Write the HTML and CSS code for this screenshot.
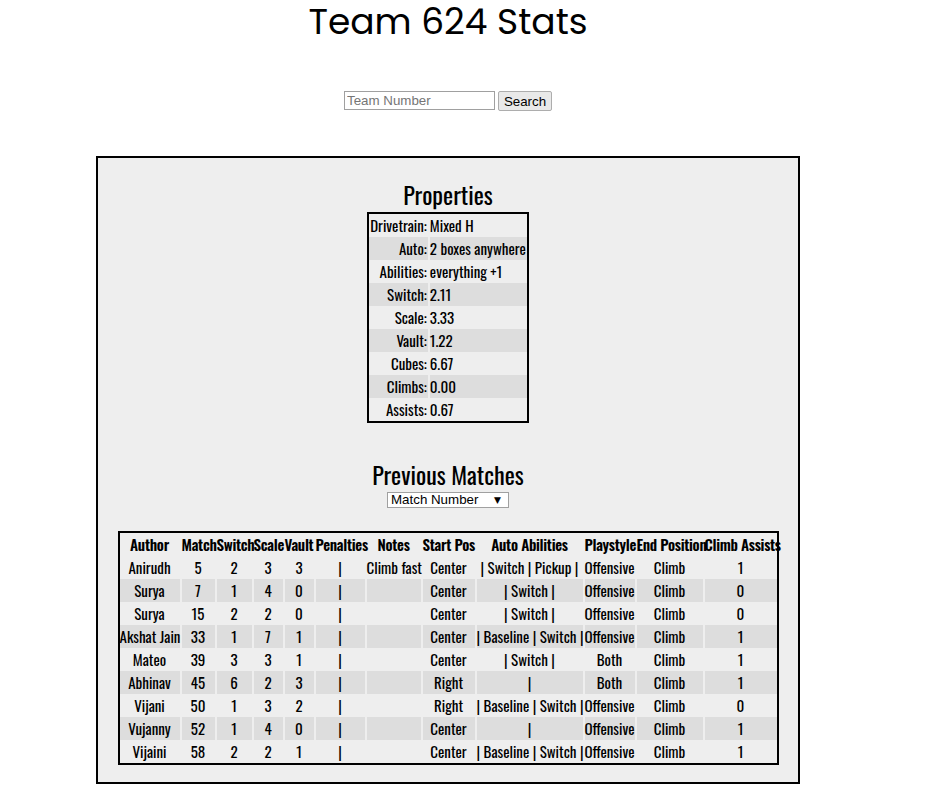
FILE: index.html
```html
<!DOCTYPE html>
<html>
<head>
<meta charset="utf-8">
<title>Team 624 Stats</title>
<link rel="stylesheet" href="styles.css">
</head>
<body>
<div class="page">
  <h1 class="title">Team 624 Stats</h1>
  <form class="search">
    <input class="search-input" type="text" placeholder="Team Number">
    <button class="search-btn" type="button">Search</button>
  </form>
  <div class="panel">
    <h2 class="heading">Properties</h2>
    <table class="props">
      <tr><td class="k">Drivetrain:</td><td class="v">Mixed H</td></tr>
      <tr><td class="k">Auto:</td><td class="v">2 boxes anywhere</td></tr>
      <tr><td class="k">Abilities:</td><td class="v">everything +1</td></tr>
      <tr><td class="k">Switch:</td><td class="v">2.11</td></tr>
      <tr><td class="k">Scale:</td><td class="v">3.33</td></tr>
      <tr><td class="k">Vault:</td><td class="v">1.22</td></tr>
      <tr><td class="k">Cubes:</td><td class="v">6.67</td></tr>
      <tr><td class="k">Climbs:</td><td class="v">0.00</td></tr>
      <tr><td class="k">Assists:</td><td class="v">0.67</td></tr>
    </table>
    <h2 class="heading heading-matches">Previous Matches</h2>
    <div class="sort">
      <select class="sort-select"><option>Match Number</option></select>
      <span class="sort-arrow">▼</span>
    </div>
    <table class="matches">
      <thead>
        <tr>
          <th class="c-author">Author</th><th class="c-match">Match</th><th class="c-switch">Switch</th><th class="c-scale">Scale</th><th class="c-vault">Vault</th><th class="c-pen">Penalties</th><th class="c-notes">Notes</th><th class="c-start">Start Pos</th><th class="c-auto">Auto Abilities</th><th class="c-play">Playstyle</th><th class="c-end">End Position</th><th class="c-climb">Climb Assists</th>
        </tr>
      </thead>
      <tbody>
        <tr><td>Anirudh</td><td>5</td><td>2</td><td>3</td><td>3</td><td>|</td><td>Climb fast</td><td>Center</td><td>| Switch | Pickup |</td><td>Offensive</td><td>Climb</td><td>1</td></tr>
        <tr><td>Surya</td><td>7</td><td>1</td><td>4</td><td>0</td><td>|</td><td></td><td>Center</td><td>| Switch |</td><td>Offensive</td><td>Climb</td><td>0</td></tr>
        <tr><td>Surya</td><td>15</td><td>2</td><td>2</td><td>0</td><td>|</td><td></td><td>Center</td><td>| Switch |</td><td>Offensive</td><td>Climb</td><td>0</td></tr>
        <tr><td>Akshat Jain</td><td>33</td><td>1</td><td>7</td><td>1</td><td>|</td><td></td><td>Center</td><td>| Baseline | Switch |</td><td>Offensive</td><td>Climb</td><td>1</td></tr>
        <tr><td>Mateo</td><td>39</td><td>3</td><td>3</td><td>1</td><td>|</td><td></td><td>Center</td><td>| Switch |</td><td>Both</td><td>Climb</td><td>1</td></tr>
        <tr><td>Abhinav</td><td>45</td><td>6</td><td>2</td><td>3</td><td>|</td><td></td><td>Right</td><td>|</td><td>Both</td><td>Climb</td><td>1</td></tr>
        <tr><td>Vijani</td><td>50</td><td>1</td><td>3</td><td>2</td><td>|</td><td></td><td>Right</td><td>| Baseline | Switch |</td><td>Offensive</td><td>Climb</td><td>0</td></tr>
        <tr><td>Vujanny</td><td>52</td><td>1</td><td>4</td><td>0</td><td>|</td><td></td><td>Center</td><td>|</td><td>Offensive</td><td>Climb</td><td>1</td></tr>
        <tr><td>Vijaini</td><td>58</td><td>2</td><td>2</td><td>1</td><td>|</td><td></td><td>Center</td><td>| Baseline | Switch |</td><td>Offensive</td><td>Climb</td><td>1</td></tr>
      </tbody>
    </table>
  </div>
</div>
</body>
</html>
```
FILE: styles.css
```css
html, body {
  margin: 0;
  padding: 0;
  background: #ffffff;
}

.page {
  width: 896px;
  font-family: "Oswald", "Open Sans Condensed", "DejaVu Sans Condensed", sans-serif;
  font-size: 15px;
  color: #000;
}

.title {
  margin: 0;
  text-align: center;
  font-family: "Poppins", "Inter", sans-serif;
  font-weight: 400;
  font-size: 36px;
  line-height: 44px;
  color: #000;
}

.search {
  margin: 47px 0 0 0;
  display: flex;
  justify-content: center;
  gap: 3px;
}

.search-input {
  box-sizing: border-box;
  width: 151px;
  height: 19px;
  margin: 0;
  padding: 1px 2px;
  border: 1px solid #a0a0a0;
  font-family: "Liberation Sans", Arial, sans-serif;
  font-size: 13.33px;
  background: #fff;
}

.search-input::placeholder {
  color: #757575;
}

.search-btn {
  box-sizing: border-box;
  width: 54px;
  height: 20px;
  margin: 0;
  padding: 0;
  border: 1px solid #adadad;
  border-radius: 2px;
  background: #e9e9e9;
  font-family: "Liberation Sans", Arial, sans-serif;
  font-size: 13.33px;
  font-weight: normal;
  color: #000;
}

.panel {
  box-sizing: border-box;
  width: 704px;
  height: 628px;
  margin: 45px auto 0 auto;
  border: 2px solid #000;
  background: #eeeeee;
  padding-top: 1px;
}

.heading {
  margin: 20px 0 3px 0;
  text-align: center;
  font-weight: 400;
  font-size: 24px;
  line-height: 30px;
  color: #000;
}

.heading-matches {
  margin-top: 36px;
}

.props {
  margin: 0 auto;
  border: 2px solid #000;
  border-collapse: separate;
  border-spacing: 0;
}

.props td {
  height: 23px;
  padding: 0 1px;
  line-height: 23px;
  white-space: nowrap;
}

.props tr:nth-child(even) td {
  background: #dddddd;
}

.props .k {
  text-align: right;
}

.props .v {
  border-left: 2px solid #eeeeee;
  padding-left: 0;
}

.sort {
  position: relative;
  width: 122px;
  height: 16px;
  margin: 0 auto;
}

.sort-select {
  appearance: none;
  -webkit-appearance: none;
  display: block;
  box-sizing: border-box;
  width: 122px;
  height: 16px;
  margin: 0;
  padding: 0 0 0 3px;
  border: 1px solid #a0a0a0;
  border-radius: 0;
  background: #fff;
  font-family: "Liberation Sans", Arial, sans-serif;
  font-size: 13.33px;
  line-height: 14px;
  color: #000;
}

.sort-arrow {
  position: absolute;
  right: 8px;
  top: 1px;
  font-family: "DejaVu Sans", sans-serif;
  font-size: 9px;
  line-height: 14px;
  color: #000;
  pointer-events: none;
}

.matches {
  margin: 23px auto 0 auto;
  table-layout: fixed;
  width: 661px;
  border: 2px solid #000;
  border-collapse: separate;
  border-spacing: 0;
}

.matches th,
.matches td {
  box-sizing: border-box;
  height: 23px;
  padding: 0;
  line-height: 23px;
  text-align: center;
  white-space: nowrap;
  overflow: visible;
}

.matches th + th,
.matches td + td {
  border-left: 2px solid #eeeeee;
}

.matches th {
  font-weight: 600;
  letter-spacing: -0.3px;
  color: #000;
}

.matches tbody tr:nth-child(even) td {
  background: #dddddd;
}

.c-author { width: 60px; }
.c-match { width: 35px; }
.c-switch { width: 37px; }
.c-scale { width: 31px; }
.c-vault { width: 31px; }
.c-pen { width: 51px; }
.c-notes { width: 56px; }
.c-start { width: 54px; }
.c-auto { width: 108px; }
.c-play { width: 52px; }
.c-end { width: 68px; }
.c-climb { width: 74px; }
```
